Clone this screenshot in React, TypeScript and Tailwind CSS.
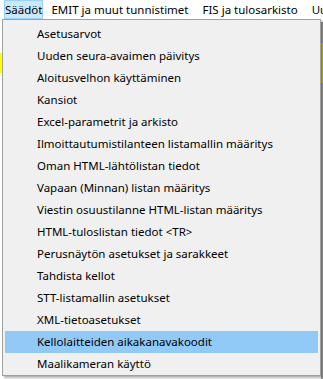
import React from "react";

const items = [
  "Asetusarvot",
  "Uuden seura-avaimen päivitys",
  "Aloitusvelhon käyttäminen",
  "Kansiot",
  "Excel-parametrit ja arkisto",
  "Ilmoittautumistilanteen listamallin määritys",
  "Oman HTML-lähtölistan tiedot",
  "Vapaan (Minnan) listan määritys",
  "Viestin osuustilanne HTML-listan määritys",
  "HTML-tuloslistan tiedot <TR>",
  "Perusnäytön asetukset ja sarakkeet",
  "Tahdista kellot",
  "STT-listamallin asetukset",
  "XML-tietoasetukset",
  "Kellolaitteiden aikakanavakoodit",
  "Maalikameran käyttö",
];

const menus = ["EMIT ja muut tunnistimet", "FIS ja tulosarkisto", "Uuden"];

const ACTIVE = 14;

export default function App() {
  return (
    <div
      className="relative w-[323px] h-[379px] overflow-hidden bg-white text-[11.5px] text-black"
      style={{ fontFamily: '"Noto Sans", "Open Sans", sans-serif' }}
    >
      {/* menu bar */}
      <div className="flex h-[19px] items-stretch whitespace-nowrap">
        <div className="ml-[4px] mr-[1px] flex w-[48px] items-center justify-center border border-[#99d1ff] bg-[#cce8ff] leading-none">
          Säädöt
        </div>
        {menus.map((m) => (
          <div key={m} className="flex items-center px-[7px] leading-none">
            {m}
          </div>
        ))}
      </div>

      {/* window content peeking out behind the dropdown */}
      <div className="absolute left-0 top-[53px] h-[20px] w-[2px] bg-[#ffff00]" />
      <div className="absolute right-0 top-[22px] h-[357px] w-[2px] bg-[#a0a0a0]" />
      <div className="absolute right-0 top-[43px] h-[40px] w-[2px] bg-[#c8c800]" />

      {/* dropdown */}
      <div className="absolute left-[2px] top-[19px] w-[319px] border border-[#a0a0a0] bg-[#f0f0f0] pt-[3px] shadow-[2px_2px_2px_rgba(0,0,0,0.3)]">
        {items.map((label, i) => (
          <div
            key={label}
            className={
              i === ACTIVE
                ? "mx-[2px] flex h-[22px] items-center bg-[#91c9f7] pl-[32px] whitespace-nowrap"
                : "mx-[2px] flex h-[22px] items-center pl-[32px] whitespace-nowrap"
            }
          >
            {label}
          </div>
        ))}
      </div>
    </div>
  );
}
